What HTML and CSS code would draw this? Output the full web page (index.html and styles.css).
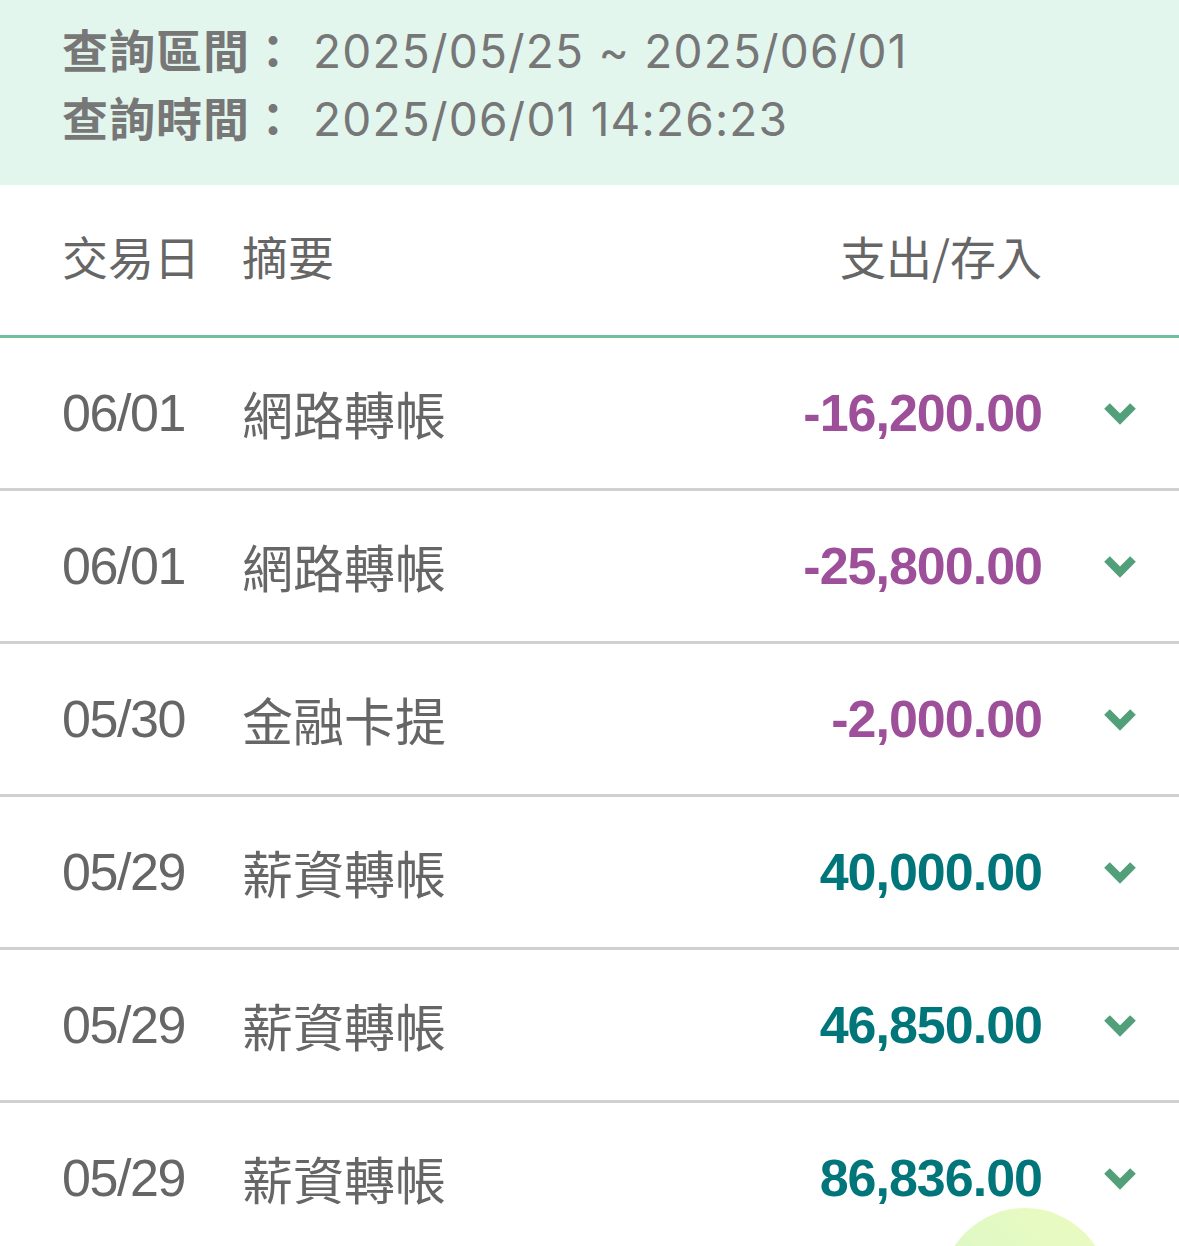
FILE: index.html
```html
<!DOCTYPE html>
<html lang="zh-Hant">
<head>
    <meta charset="UTF-8">
    <meta name="viewport" content="width=device-width, initial-scale=1.0">
    <title>交易明細</title>
    <link rel="stylesheet" href="styles.css">
</head>
<body>
    <!-- 查詢資訊 -->
    <div class="query-info">
        <div class="query-line"><span class="query-label">查詢區間</span><span class="query-colon">：</span><span class="query-value">2025/05/25 ~ 2025/06/01</span></div>
        <div class="query-line"><span class="query-label">查詢時間</span><span class="query-colon">：</span><span class="query-value">2025/06/01 14:26:23</span></div>
    </div>

    <div class="table-head">
        <div class="col-date">交易日</div>
        <div class="col-memo">摘要</div>
        <div class="col-amount">支出/存入</div>
        <div class="col-toggle"></div>
    </div>

    <div class="tx-list">
        <div class="tx-row">
            <div class="col-date">06/01</div>
            <div class="col-memo">網路轉帳</div>
            <div class="col-amount out">-16,200.00</div>
            <div class="col-toggle"><svg class="chevron" viewBox="0 0 32 26"><path d="M3 6 L16 19 L29 6"/></svg></div>
        </div>
        <div class="tx-row">
            <div class="col-date">06/01</div>
            <div class="col-memo">網路轉帳</div>
            <div class="col-amount out">-25,800.00</div>
            <div class="col-toggle"><svg class="chevron" viewBox="0 0 32 26"><path d="M3 6 L16 19 L29 6"/></svg></div>
        </div>
        <div class="tx-row">
            <div class="col-date">05/30</div>
            <div class="col-memo">金融卡提</div>
            <div class="col-amount out">-2,000.00</div>
            <div class="col-toggle"><svg class="chevron" viewBox="0 0 32 26"><path d="M3 6 L16 19 L29 6"/></svg></div>
        </div>
        <div class="tx-row">
            <div class="col-date">05/29</div>
            <div class="col-memo">薪資轉帳</div>
            <div class="col-amount in">40,000.00</div>
            <div class="col-toggle"><svg class="chevron" viewBox="0 0 32 26"><path d="M3 6 L16 19 L29 6"/></svg></div>
        </div>
        <div class="tx-row">
            <div class="col-date">05/29</div>
            <div class="col-memo">薪資轉帳</div>
            <div class="col-amount in">46,850.00</div>
            <div class="col-toggle"><svg class="chevron" viewBox="0 0 32 26"><path d="M3 6 L16 19 L29 6"/></svg></div>
        </div>
        <div class="tx-row">
            <div class="col-date">05/29</div>
            <div class="col-memo">薪資轉帳</div>
            <div class="col-amount in">86,836.00</div>
            <div class="col-toggle"><svg class="chevron" viewBox="0 0 32 26"><path d="M3 6 L16 19 L29 6"/></svg></div>
        </div>
    </div>

    <!-- 浮動按鈕（只露出上半部） -->
    <div class="float-btn"></div>
</body>
</html>
```

FILE: styles.css
```css
body {
    margin: 0;
    font-family: "Liberation Sans", "Noto Sans CJK TC", sans-serif;
    background: #fff;
    color: #666;
    overflow: hidden;
    height: 1246px;
    position: relative;
}

.query-info {
    background: #e2f6ee;
    padding: 14px 62px 35px;
}

.query-line {
    height: 68px;
    line-height: 68px;
    font-size: 46px;
    color: #777;
    white-space: nowrap;
}

.query-label {
    font-family: "Noto Sans CJK TC", sans-serif;
    font-weight: bold;
    letter-spacing: 1px;
}

.query-colon {
    font-family: "Noto Sans CJK TC", sans-serif;
    font-weight: bold;
}

.query-value {
    font-family: Inter, "Noto Sans", sans-serif;
    letter-spacing: 1.2px;
    margin-left: 17px;
}

.table-head,
.tx-row {
    display: flex;
    align-items: center;
    padding-left: 62px;
    box-sizing: border-box;
}

.table-head {
    height: 153px;
    padding-bottom: 10px;
    border-bottom: 3px solid #70bf9f;
    font-family: "Noto Sans CJK TC", sans-serif;
    font-size: 46px;
    color: #666;
}

.tx-row {
    height: 153px;
    border-bottom: 3px solid #d0d0d0;
    font-size: 52px;
    letter-spacing: -1.4px;
}

.col-date {
    width: 180px;
    flex-shrink: 0;
}

.col-memo {
    font-family: "Noto Sans CJK TC", sans-serif;
    font-size: 51px;
    letter-spacing: 0;
}

.table-head .col-memo {
    font-size: 46px;
}

.col-amount {
    flex: 1;
    text-align: right;
    white-space: nowrap;
}

.tx-row .col-amount {
    font-weight: bold;
    letter-spacing: -1px;
}

.col-amount.out {
    color: #9d4f9a;
}

.col-amount.in {
    color: #00767b;
}

.col-toggle {
    width: 137px;
    flex-shrink: 0;
    display: flex;
    justify-content: flex-end;
    padding-right: 43px;
    box-sizing: border-box;
}

.chevron {
    width: 32px;
    height: 26px;
    display: block;
}

.chevron path {
    fill: none;
    stroke: #52a07a;
    stroke-width: 8;
}

.float-btn {
    position: absolute;
    left: 941px;
    top: 1208px;
    width: 168px;
    height: 38px;
    overflow: hidden;
}

.float-btn::before {
    content: '';
    display: block;
    width: 168px;
    height: 168px;
    border-radius: 50%;
    background: linear-gradient(225deg, #ecfbbf 0%, #e2f9c4 45%, #c8f5cc 100%);
}
```
